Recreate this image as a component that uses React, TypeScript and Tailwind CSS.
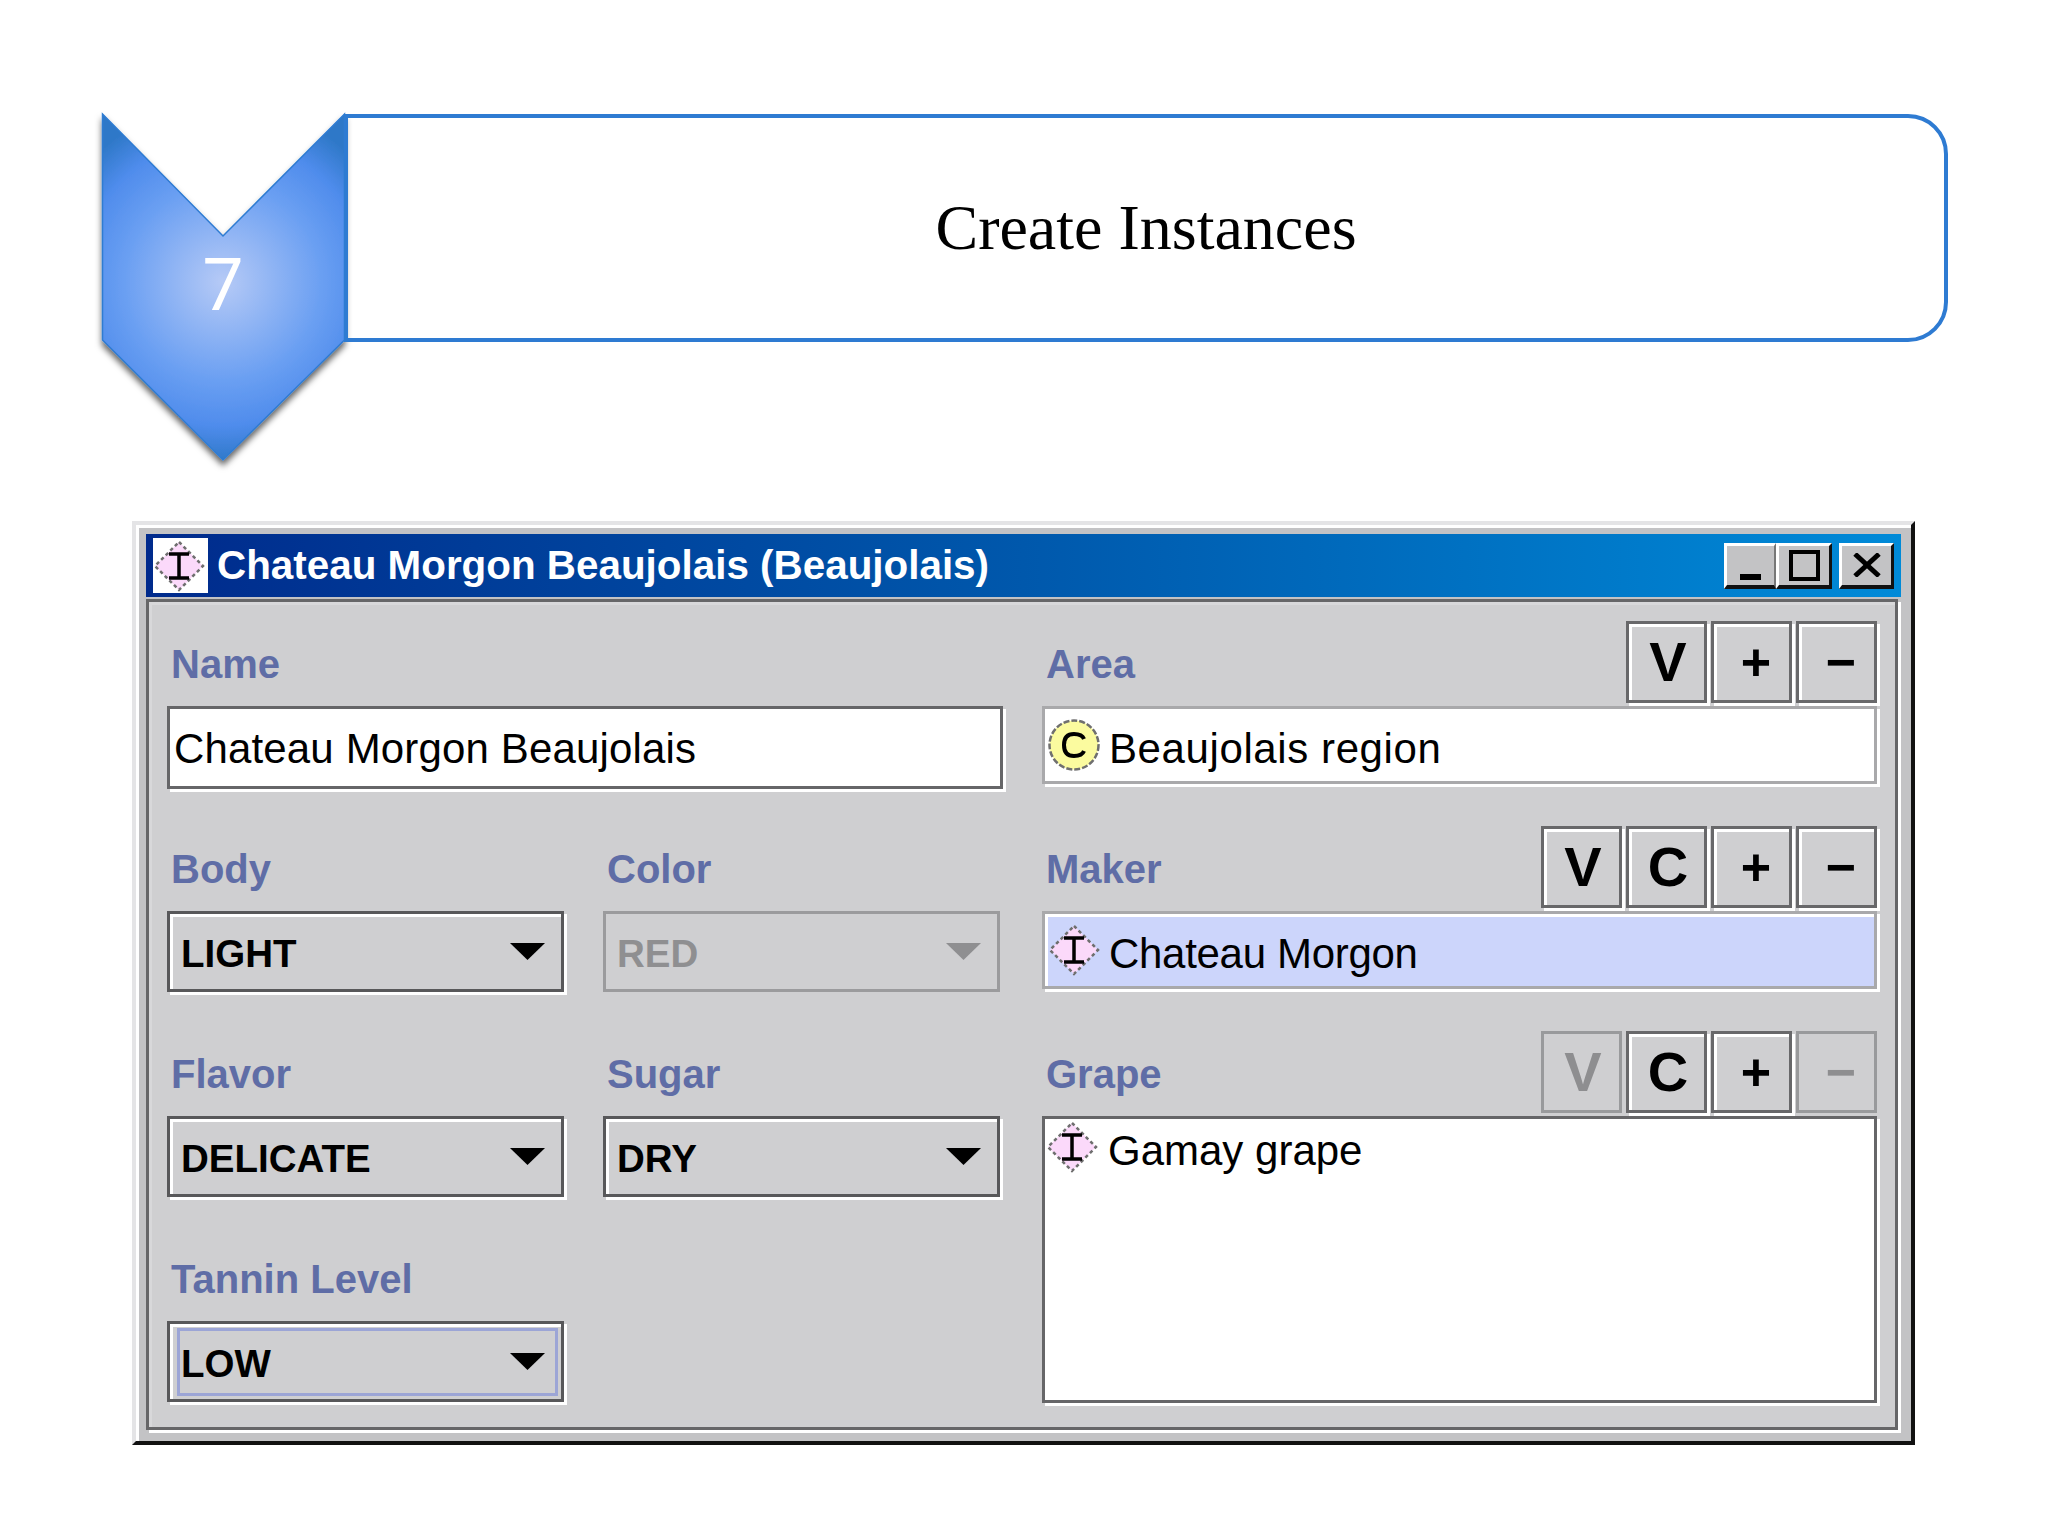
import type { ReactNode } from 'react';

const SANS = "[font-family:'Liberation_Sans',Arial,sans-serif]";

const InstanceIcon = ({ className }: { className: string }) => (
  <svg viewBox="0 0 52 52" className={className}>
    <polygon points="26,2 50,26 26,50 2,26" fill="#fbd9fa" stroke="#6f6f6f" strokeWidth="2.5" strokeDasharray="3.5 3" />
    <path d="M16 14h20M26 14v24M16 38h20" stroke="#000" strokeWidth="3.5" fill="none" />
  </svg>
);

const ClassIcon = () => (
  <svg viewBox="0 0 52 52" className="w-[52px] h-[52px] shrink-0">
    <circle cx="26" cy="26" r="24.5" fill="#fbfb9f" stroke="#6f6f6f" strokeWidth="2.5" strokeDasharray="6 2" />
    <path d="M36 20q-2-5-10-5q-10 0-10 11t10 11q8 0 10-5" stroke="#000" strokeWidth="4" fill="none" />
  </svg>
);

const ToolButton = ({ label, disabled }: { label: string; disabled?: boolean }) => {
  const isLetter = label === 'V' || label === 'C';
  return (
    <div
      className={`w-[81px] h-[82px] flex items-center justify-center border-[3px] font-bold leading-none ${SANS} ${
        disabled ? 'border-[#999a9c] text-[#8e8e90]' : 'border-[#68686a] shadow-[inset_3px_3px_0_#fff,3px_3px_0_#fff] text-black'
      } ${isLetter ? 'text-[56px] pl-[3px]' : 'text-[52px] pl-[9px]'}`}
    >
      {label}
    </div>
  );
};

const Label = ({ children }: { children: ReactNode }) => (
  <span className={`text-[40px] leading-none font-bold text-[#5f6da6] pl-[4px] ${SANS}`}>{children}</span>
);

const Combo = ({ value, disabled, focused }: { value: string; disabled?: boolean; focused?: boolean }) => (
  <div
    className={
      disabled
        ? 'relative h-[81px] border-[3px] border-[#9b9b9d] flex items-center pl-[11px] pr-[16px]'
        : 'relative h-[81px] border-[3px] border-[#58585a] shadow-[inset_3px_3px_0_#fff,3px_3px_0_#fff] flex items-center pl-[11px] pr-[16px]'
    }
  >
    {focused && <div className="absolute left-[7px] right-[3px] top-[4px] bottom-[3px] border-[3px] border-[#9ca5d6]" />}
    <span className={`flex-1 pt-[6px] text-[38.5px] leading-none font-bold ${disabled ? 'text-[#8f8f91]' : 'text-black'} ${SANS}`}>{value}</span>
    <svg viewBox="0 0 35 17" className="w-[35px] h-[17px]">
      <polygon points="0,0 35,0 17.5,17" fill={disabled ? '#8f8f91' : '#000'} />
    </svg>
  </div>
);

const FieldRow = ({ label, buttons, children }: { label: string; buttons?: ReactNode; children: ReactNode }) => (
  <div className="flex flex-col">
    <div className="h-[86px] flex items-center justify-between pt-[1px]">
      <Label>{label}</Label>
      {buttons && <div className="flex gap-[4px] self-start">{buttons}</div>}
    </div>
    {children}
  </div>
);

export default function App() {
  return (
    <div className="w-[2048px] h-[1536px] bg-white overflow-hidden pt-[114px]">
      {/* slide header */}
      <div className="flex items-start pl-[102px] h-[346px]">
        <svg viewBox="0 0 243 356" className="w-[243px] h-[356px] shrink-0 overflow-visible">
          <defs>
            <radialGradient id="chev" gradientUnits="userSpaceOnUse" cx="121" cy="168" r="180">
              <stop offset="0" stopColor="#b6caf6" />
              <stop offset="0.55" stopColor="#6a9ff2" />
              <stop offset="0.8" stopColor="#4f8cec" />
              <stop offset="1" stopColor="#2e78c8" />
            </radialGradient>
            <filter id="chevShadow" x="-10%" y="-10%" width="120%" height="120%">
              <feDropShadow dx="0" dy="5" stdDeviation="3" floodColor="#000" floodOpacity="0.6" />
            </filter>
          </defs>
          <polygon
            points="0.5,0 121,122 242.5,0 242.5,226 121,346 0.5,226"
            fill="url(#chev)"
            stroke="#2e7bd2"
            strokeWidth="1.5"
            filter="url(#chevShadow)"
          />
          <text x="121" y="196" textAnchor="middle" fill="#fff" fontSize="73" fontFamily="Roboto, sans-serif">
            7
          </text>
        </svg>
        <div className="w-[1604px] h-[228px] -ml-px border-[4px] border-[#2e7bd2] rounded-r-[40px] flex items-center justify-center">
          <span className="text-[64px] leading-none text-black [font-family:'Liberation_Serif',serif]">Create Instances</span>
        </div>
      </div>

      {/* instance window */}
      <div className="ml-[132px] mt-[61px] w-[1783px] h-[924px] border-l-[4px] border-t-[4px] border-[#e4e4e6] border-r-[4px] border-r-[#111] border-b-[4px] border-b-[#111] bg-[#c3c3c5] shadow-[inset_3px_3px_0_#fff] pl-[10px] pt-[9px] pr-[10px] pb-[11px] flex flex-col">
        <div className="h-[63px] shrink-0 flex items-center pl-[7px] pr-[7px] bg-gradient-to-r from-[#002a8c] via-[#0058ac] to-[#008ad8]">
          <div className="w-[55px] h-[55px] bg-white flex items-center justify-start shrink-0">
            <InstanceIcon className="w-[52px] h-[52px]" />
          </div>
          <span className={`ml-[9px] flex-1 text-white font-bold text-[40.4px] leading-none ${SANS}`}>
            Chateau Morgon Beaujolais (Beaujolais)
          </span>
          <div className="flex">
            <div className="w-[52px] h-[46px] bg-[#c3c3c5] border-t-[3px] border-l-[3px] border-white border-b-[4px] border-b-[#111] border-r-[2px] border-r-[#777] flex items-end justify-center pb-[5px]">
              <div className="w-[21px] h-[6px] bg-black" />
            </div>
            <div className="w-[56px] h-[46px] bg-[#c3c3c5] border-t-[3px] border-l-[3px] border-white border-b-[4px] border-b-[#111] border-r-[3px] border-r-[#111] flex items-center justify-center mr-[7px]">
              <div className="w-[31px] h-[31px] border-[4px] border-black" />
            </div>
            <div className="w-[55px] h-[46px] bg-[#c3c3c5] border-t-[3px] border-l-[3px] border-white border-b-[4px] border-b-[#111] border-r-[3px] border-r-[#111] flex items-center justify-center">
              <svg viewBox="0 0 28 24" className="w-[28px] h-[24px]">
                <path d="M2 1l24 22M26 1L2 23" stroke="#000" strokeWidth="5" fill="none" />
              </svg>
            </div>
          </div>
        </div>

        <div className="flex-1 mt-[2px] mr-[3px] border-[3px] border-[#666668] shadow-[inset_3px_3px_0_#d8d8da,3px_3px_0_#fff] bg-[#cfcfd1] pl-[18px] pr-[19px] pt-[18px] grid grid-cols-[836px_835px] gap-x-[39px]">
          <div className="flex flex-col gap-[38px]">
            <FieldRow label="Name">
              <div className="h-[83px] -mb-[2px] border-[3px] border-[#666668] shadow-[3px_3px_0_#fff] bg-white flex items-center pl-[4px]">
                <span className={`pt-[3px] text-[42px] tracking-[0.15px] leading-none text-black ${SANS}`}>Chateau Morgon Beaujolais</span>
              </div>
            </FieldRow>
            <div className="grid grid-cols-[397px_397px] gap-x-[39px]">
              <FieldRow label="Body"><Combo value="LIGHT" /></FieldRow>
              <FieldRow label="Color"><Combo value="RED" disabled /></FieldRow>
            </div>
            <div className="grid grid-cols-[397px_397px] gap-x-[39px]">
              <FieldRow label="Flavor"><Combo value="DELICATE" /></FieldRow>
              <FieldRow label="Sugar"><Combo value="DRY" /></FieldRow>
            </div>
            <div className="grid grid-cols-[397px_397px] gap-x-[39px]">
              <FieldRow label="Tannin Level"><Combo value="LOW" focused /></FieldRow>
            </div>
          </div>

          <div className="flex flex-col gap-[38px]">
            <FieldRow
              label="Area"
              buttons={<><ToolButton label="V" /><ToolButton label="+" /><ToolButton label="−" /></>}
            >
              <div className="h-[78px] mb-[3px] border-[3px] border-[#a9a9ab] shadow-[inset_3px_3px_0_#fff,3px_3px_0_#fff] bg-white flex items-center pl-[3px] gap-[9px]">
                <ClassIcon />
                <span className={`pt-[7px] text-[42px] tracking-[0.6px] leading-none text-black ${SANS}`}>Beaujolais region</span>
              </div>
            </FieldRow>
            <FieldRow
              label="Maker"
              buttons={<><ToolButton label="V" /><ToolButton label="C" /><ToolButton label="+" /><ToolButton label="−" /></>}
            >
              <div className="h-[78px] mb-[3px] border-[3px] border-[#a9a9ab] shadow-[inset_3px_3px_0_#fff,3px_3px_0_#fff] bg-[#ccd5fb] flex items-center pl-[3px] gap-[9px]">
                <InstanceIcon className="w-[52px] h-[52px] shrink-0" />
                <span className={`pt-[7px] text-[42px] tracking-[-0.3px] leading-none text-black ${SANS}`}>Chateau Morgon</span>
              </div>
            </FieldRow>
            <FieldRow
              label="Grape"
              buttons={<><ToolButton label="V" disabled /><ToolButton label="C" /><ToolButton label="+" /><ToolButton label="−" disabled /></>}
            >
              <div className="h-[287px] border-[3px] border-[#666668] shadow-[3px_3px_0_#fff] bg-white pl-[1px] pt-[2px] flex items-start gap-[10px]">
                <InstanceIcon className="w-[52px] h-[52px] shrink-0" />
                <span className={`mt-[6px] text-[42px] leading-[48px] text-black ${SANS}`}>Gamay grape</span>
              </div>
            </FieldRow>
          </div>
        </div>
      </div>
    </div>
  );
}
